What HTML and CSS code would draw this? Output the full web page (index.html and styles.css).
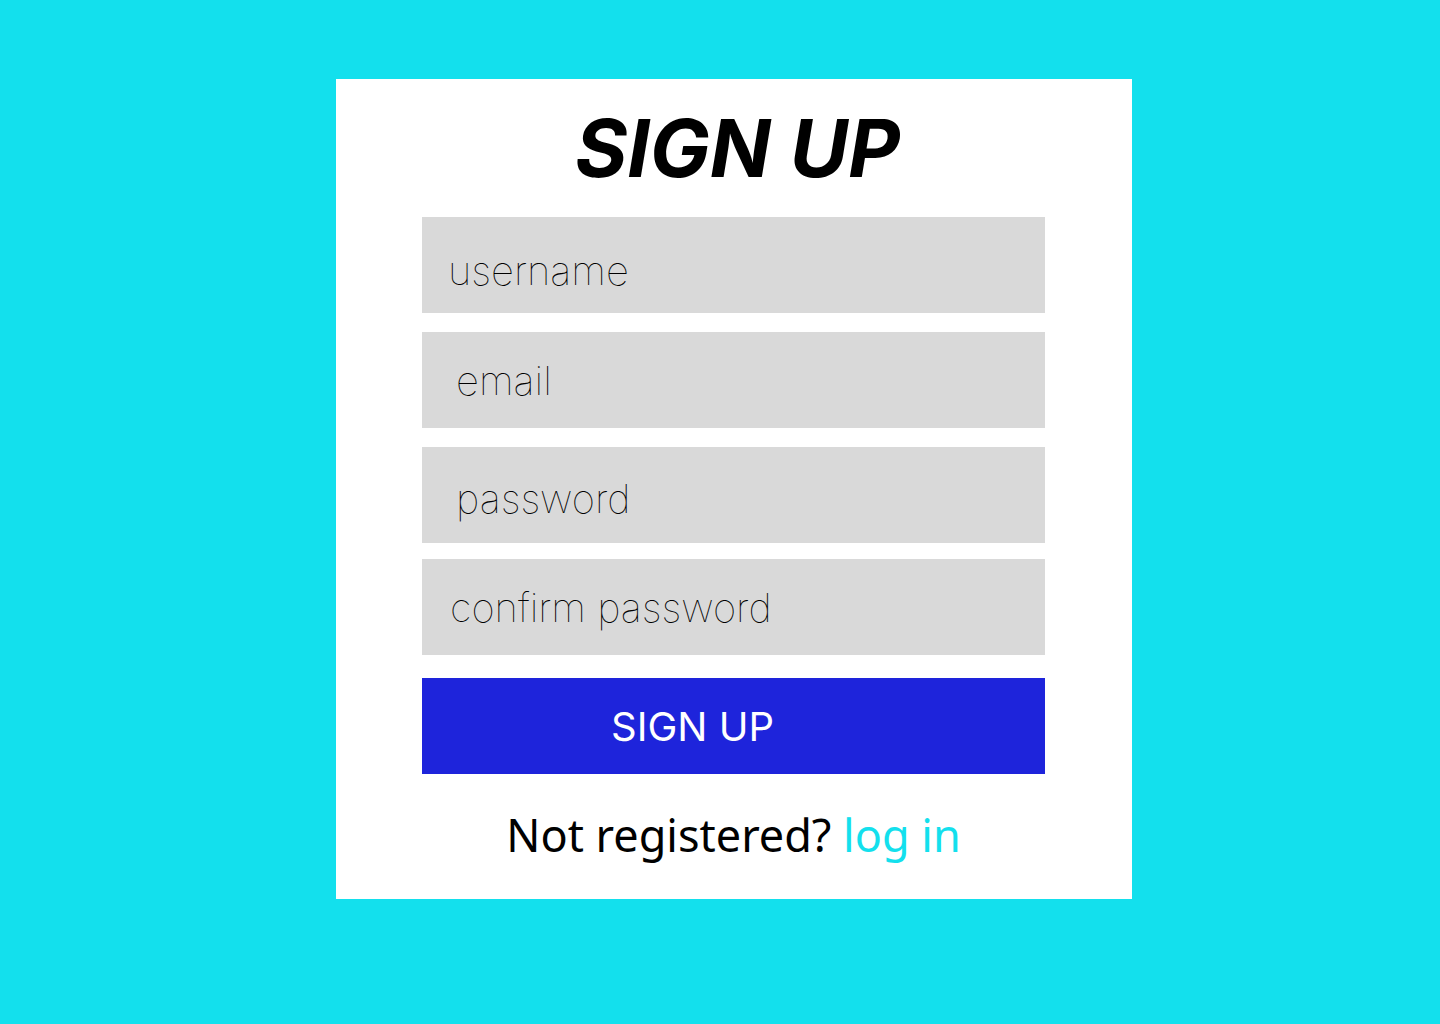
FILE: index.html
```html
<!DOCTYPE html>
<html lang="en">
<head>
<meta charset="utf-8">
<title>Sign up</title>
<link rel="stylesheet" href="styles.css">
</head>
<body>
<main class="page">
  <form class="card">
    <h1 class="title">SIGN UP</h1>
    <div class="fields">
      <input class="field field--username" type="text" placeholder="username">
      <input class="field field--email" type="email" placeholder="email">
      <input class="field field--password" type="password" placeholder="password">
      <input class="field field--confirm" type="password" placeholder="confirm password">
    </div>
    <button class="submit" type="button">SIGN UP</button>
    <p class="footer">Not registered? <a class="login" href="#">log in</a></p>
  </form>
</main>
</body>
</html>
```
FILE: styles.css
```css
html, body {
  margin: 0;
  padding: 0;
}
body {
  background: #13e0ed;
  width: 1440px;
  height: 1024px;
  overflow: hidden;
}
.page {
  padding: 79px 0 0 336px;
}
.card {
  width: 796px;
  height: 820px;
  box-sizing: border-box;
  background: #ffffff;
  padding: 29px 87px 0 86px;
  display: flex;
  flex-direction: column;
}
.title {
  margin: 0 0 29px;
  font-family: Inter, "Liberation Sans", sans-serif;
  font-size: 80px;
  line-height: 80px;
  font-weight: 700;
  font-style: italic;
  text-align: center;
  color: #000;
  padding-left: 8px;
}
.fields {
  display: flex;
  flex-direction: column;
  gap: 19px;
}
.field {
  display: block;
  width: 623px;
  height: 96px;
  box-sizing: border-box;
  border: 0;
  outline: none;
  background: #d9d9d9;
  font-family: Inter, "Liberation Sans", sans-serif;
  font-size: 40px;
  font-weight: 100;
  color: #000;
  padding: 0 10px 0 26px;
  margin: 0;
}
.field::placeholder {
  color: #000;
  opacity: 1;
}
.field--username { padding-top: 11px; padding-left: 26px; }
.field--email { padding-top: 1px; padding-left: 34px; }
.field--password { padding-top: 7px; padding-left: 34px; }
.field--confirm { padding-top: 1px; padding-left: 28px; margin-top: -3px; }
.submit {
  margin-top: 23px;
  width: 623px;
  height: 96px;
  border: 0;
  background: #1e24db;
  color: #fff;
  font-family: Inter, "Liberation Sans", sans-serif;
  font-size: 40px;
  font-weight: 400;
  text-align: left;
  padding: 0 0 0 189px;
  cursor: pointer;
}
.footer {
  margin: 39px 0 0;
  font-family: "Noto Sans", "Open Sans", sans-serif;
  font-size: 45px;
  line-height: 44px;
  text-align: center;
  color: #000;
}
.login {
  color: #13e0ed;
  text-decoration: none;
}
```
